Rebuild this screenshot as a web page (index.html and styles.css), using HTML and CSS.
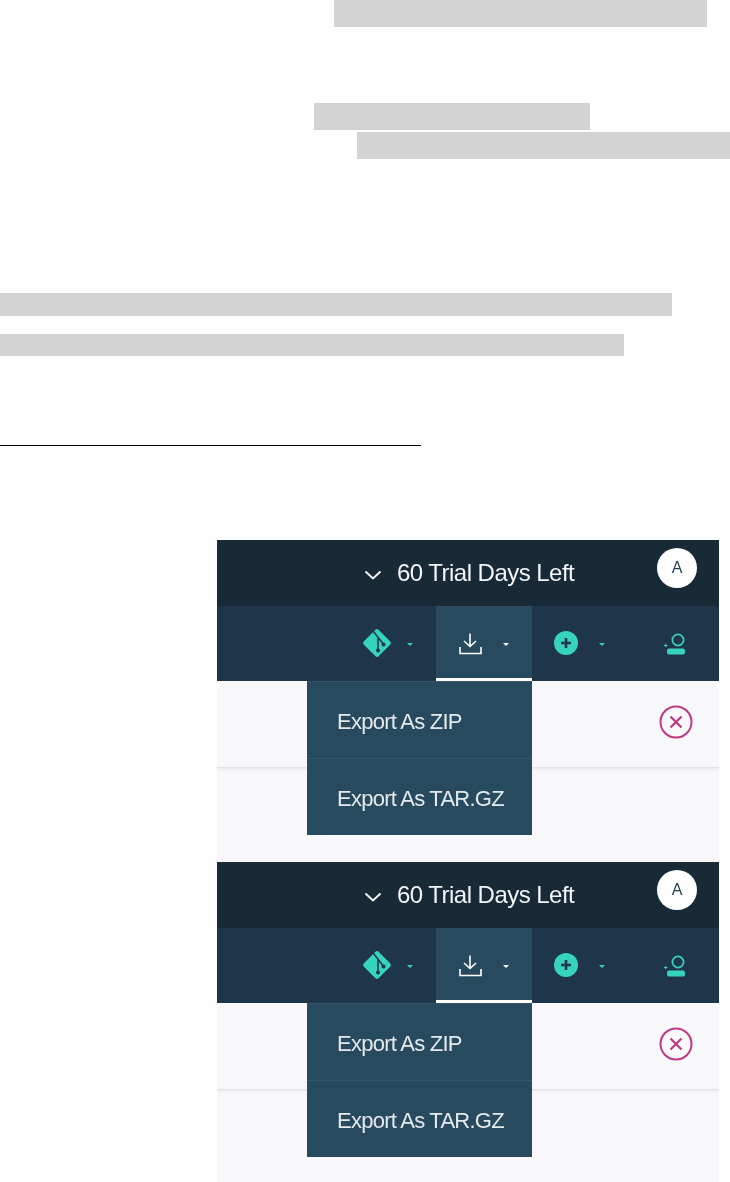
FILE: index.html
```html
<!DOCTYPE html>
<html lang="en">
<head>
<meta charset="utf-8">
<title>Export dropdown</title>
<link rel="stylesheet" href="styles.css">
</head>
<body>
<div class="bar bar-a"></div>
<div class="bar bar-b"></div>
<div class="bar bar-c"></div>
<div class="bar bar-d"></div>
<div class="bar bar-e"></div>
<div class="rule"></div>

<section class="shots">
  <article class="card card-first">
    <header class="top">
      <svg class="chev" width="18" height="10" viewBox="0 0 18 10"><path d="M1.5 1.5 9 8.5 16.5 1.5" fill="none" stroke="#f2f4f5" stroke-width="2"/></svg>
      <span class="trial">60 Trial Days Left</span>
      <span class="avatar">A</span>
    </header>
    <nav class="nav">
      <div class="item item-git">
        <svg class="ico" width="32" height="32" viewBox="0 0 32 32"><rect x="5.5" y="5.5" width="21" height="21" rx="2.5" transform="rotate(45 16 16)" fill="#37d4bd"/><path d="M12.5 4.5 23 18M17 11V24" fill="none" stroke="#1f364a" stroke-width="1.6"/><circle cx="17" cy="23.5" r="2" fill="#1f364a"/><circle cx="22.5" cy="17.5" r="2" fill="#1f364a"/></svg>
        <i class="caret caret-teal"></i>
      </div>
      <div class="item item-active">
        <svg class="ico" width="24" height="22" viewBox="0 0 24 22"><path d="M12 .5V13M6 8 12 13.5 18 8M2 14V20.5H23V14" fill="none" stroke="#fff" stroke-width="1.6"/></svg>
        <i class="caret caret-white"></i>
      </div>
      <div class="item item-add">
        <svg class="ico" width="24" height="24" viewBox="0 0 24 24"><circle cx="12" cy="12" r="12" fill="#37d4bd"/><path d="M12 7V17M7 12H17" stroke="#1f364a" stroke-width="2.6"/></svg>
        <i class="caret caret-teal"></i>
      </div>
      <div class="item item-user">
        <svg class="ico" width="24" height="23" viewBox="0 0 24 23"><circle cx="14" cy="7" r="5.6" fill="none" stroke="#37d4bd" stroke-width="1.7"/><rect x="3" y="15.5" width="18" height="6" rx="2" fill="#37d4bd"/><path d="M0 12.5H3.5M1.75 10.75V14.25" stroke="#37d4bd" stroke-width="1"/></svg>
      </div>
    </nav>
    <div class="body">
      <div class="row">
        <svg class="close" width="34" height="34" viewBox="0 0 34 34"><circle cx="17" cy="17" r="15.5" fill="none" stroke="#c0387f" stroke-width="2"/><path d="M11.5 11.5 22.5 22.5M22.5 11.5 11.5 22.5" stroke="#c0387f" stroke-width="2.2"/></svg>
      </div>
      <ul class="menu">
        <li class="menu-item">Export As ZIP</li>
        <li class="menu-item">Export As TAR.GZ</li>
      </ul>
    </div>
  </article>

  <article class="card card-second">
    <header class="top">
      <svg class="chev" width="18" height="10" viewBox="0 0 18 10"><path d="M1.5 1.5 9 8.5 16.5 1.5" fill="none" stroke="#f2f4f5" stroke-width="2"/></svg>
      <span class="trial">60 Trial Days Left</span>
      <span class="avatar">A</span>
    </header>
    <nav class="nav">
      <div class="item item-git">
        <svg class="ico" width="32" height="32" viewBox="0 0 32 32"><rect x="5.5" y="5.5" width="21" height="21" rx="2.5" transform="rotate(45 16 16)" fill="#37d4bd"/><path d="M12.5 4.5 23 18M17 11V24" fill="none" stroke="#1f364a" stroke-width="1.6"/><circle cx="17" cy="23.5" r="2" fill="#1f364a"/><circle cx="22.5" cy="17.5" r="2" fill="#1f364a"/></svg>
        <i class="caret caret-teal"></i>
      </div>
      <div class="item item-active">
        <svg class="ico" width="24" height="22" viewBox="0 0 24 22"><path d="M12 .5V13M6 8 12 13.5 18 8M2 14V20.5H23V14" fill="none" stroke="#fff" stroke-width="1.6"/></svg>
        <i class="caret caret-white"></i>
      </div>
      <div class="item item-add">
        <svg class="ico" width="24" height="24" viewBox="0 0 24 24"><circle cx="12" cy="12" r="12" fill="#37d4bd"/><path d="M12 7V17M7 12H17" stroke="#1f364a" stroke-width="2.6"/></svg>
        <i class="caret caret-teal"></i>
      </div>
      <div class="item item-user">
        <svg class="ico" width="24" height="23" viewBox="0 0 24 23"><circle cx="14" cy="7" r="5.6" fill="none" stroke="#37d4bd" stroke-width="1.7"/><rect x="3" y="15.5" width="18" height="6" rx="2" fill="#37d4bd"/><path d="M0 12.5H3.5M1.75 10.75V14.25" stroke="#37d4bd" stroke-width="1"/></svg>
      </div>
    </nav>
    <div class="body">
      <div class="row">
        <svg class="close" width="34" height="34" viewBox="0 0 34 34"><circle cx="17" cy="17" r="15.5" fill="none" stroke="#c0387f" stroke-width="2"/><path d="M11.5 11.5 22.5 22.5M22.5 11.5 11.5 22.5" stroke="#c0387f" stroke-width="2.2"/></svg>
      </div>
      <ul class="menu">
        <li class="menu-item">Export As ZIP</li>
        <li class="menu-item">Export As TAR.GZ</li>
      </ul>
    </div>
  </article>
</section>
</body>
</html>
```

FILE: styles.css
```css
html, body {
  margin: 0;
  padding: 0;
  background: #fefefe;
  overflow: hidden;
}

body {
  width: 730px;
  height: 1182px;
  font-family: "Liberation Sans", Arial, sans-serif;
}

.bar { background: #d3d3d3; }
.bar-a { margin-left: 334px; width: 373px; height: 27px; }
.bar-b { margin: 76px 0 0 314px; width: 276px; height: 27px; }
.bar-c { margin: 2px 0 0 357px; width: 373px; height: 27px; }
.bar-d { margin-top: 134px; width: 672px; height: 23px; }
.bar-e { margin-top: 18px; width: 624px; height: 22px; }

.rule {
  margin-top: 89px;
  width: 421px;
  height: 1px;
  background: #000;
}

.shots {
  margin: 94px 0 0 217px;
  width: 502px;
}

.card {
  display: flex;
  flex-direction: column;
  filter: blur(0.55px);
}
.card-first { height: 322px; }
.card-second { height: 320px; }

.top {
  flex: none;
  height: 66px;
  display: flex;
  align-items: center;
  background: #182a35;
  color: #f2f4f5;
}

.chev { margin: 4px 0 0 147px; }

.trial {
  margin: 0 0 0 15px;
  font-size: 24px;
  letter-spacing: -0.53px;
  white-space: nowrap;
}

.avatar {
  margin: -10px 22px 0 auto;
  width: 40px;
  height: 40px;
  border-radius: 50%;
  background: #fff;
  color: #24465b;
  font-size: 16px;
  display: flex;
  align-items: center;
  justify-content: center;
}

.nav {
  flex: none;
  height: 75px;
  display: flex;
  justify-content: flex-end;
  background: #1f364a;
}

.item {
  display: flex;
  align-items: center;
  box-sizing: border-box;
}
.ico { display: block; flex: none; }

.item-git { width: 90px; padding: 0 0 2px 15px; }
.item-git .caret { margin: 3px 0 0 14px; }

.item-active {
  width: 96px;
  padding: 4px 0 0 22px;
  background: #274a5f;
  border-bottom: 3px solid #fff;
}
.item-active .caret { margin-left: 21px; }

.item-add { width: 105px; padding: 0 0 1px 22px; }
.item-add .caret { margin: 3px 0 0 21px; }

.item-user { width: 82px; padding: 1px 0 0 27px; }

.caret {
  display: block;
  width: 0;
  height: 0;
  border-left: 3.5px solid transparent;
  border-right: 3.5px solid transparent;
  border-top: 3.5px solid;
}
.caret-teal { color: #37d4bd; }
.caret-white { color: #fff; }

.body {
  flex: 1;
  position: relative;
  overflow: hidden;
  background: #f8f8fb;
}

.row {
  height: 82px;
  display: flex;
  align-items: center;
  justify-content: flex-end;
  padding: 0 26px 4px 0;
  border-bottom: 1px solid #e2e2e6;
  box-shadow: 0 1px 3px rgba(0, 0, 0, 0.08);
}

.menu {
  position: absolute;
  left: 90px;
  top: 0;
  width: 225px;
  margin: 0;
  padding: 0;
  list-style: none;
  background: #274a5f;
  color: #e4e9ec;
  font-size: 22px;
  letter-spacing: -0.75px;
}

.menu-item {
  height: 77px;
  box-sizing: border-box;
  padding: 3px 0 0 30px;
  display: flex;
  align-items: center;
  border-top: 1px solid #35566b;
}
```
